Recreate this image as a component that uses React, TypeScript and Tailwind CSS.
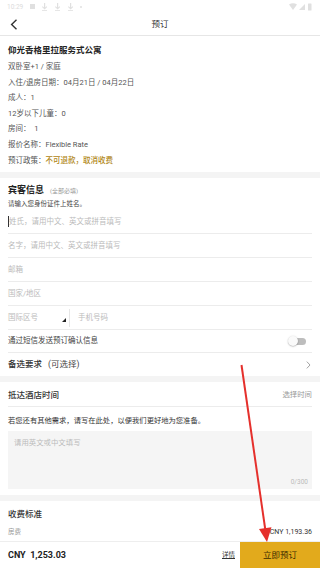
import React from "react";

const Row = ({ children, className = "" }: { children: React.ReactNode; className?: string }) => (
  <div className={`flex items-center ${className}`}>{children}</div>
);

export default function App() {
  return (
    <div className="relative w-[320px] h-[568px] overflow-hidden bg-white font-['Roboto','Noto_Sans_CJK_SC',sans-serif] flex flex-col leading-none">
      <div className="flex-1 overflow-hidden flex flex-col">
        {/* status bar */}
        <div className="h-[14px] shrink-0 flex items-center justify-between px-[7px] text-[#dcdcdc]">
          <div className="flex items-center gap-[6px]">
            <span className="text-[6.5px]">10:29</span>
            <svg width="56" height="8" viewBox="0 0 56 8" fill="#e0e0e0">
              <rect x="1" y="1" width="5" height="5" />
              <path d="M15 0h1.2v4.5l1.3-1.3.7.7-2.6 2.6-2.6-2.6.7-.7 1.3 1.3z" />
              <rect x="13" y="7" width="5" height="0.8" />
              <path d="M28 0h1.2v4.5l1.3-1.3.7.7-2.6 2.6-2.6-2.6.7-.7 1.3 1.3z" />
              <rect x="26" y="7" width="5" height="0.8" />
              <path d="M41 0h1.2v4.5l1.3-1.3.7.7-2.6 2.6-2.6-2.6.7-.7 1.3 1.3z" />
              <rect x="39" y="7" width="5" height="0.8" />
              <circle cx="52" cy="4" r="1" />
            </svg>
          </div>
          <svg width="24" height="8" viewBox="0 0 24 8" fill="#e0e0e0">
            <path d="M0 1.5 Q4 -1 8 1.5 L4 7 Z" />
            <path d="M10 7 L16 1 L16 7 Z" />
            <rect x="19" y="0.5" width="3.5" height="7" rx="0.5" />
          </svg>
        </div>
        {/* header */}
        <div className="h-[22px] shrink-0 relative flex items-center justify-center border-b border-[#e6e6e6]">
          <svg className="absolute left-[10px] top-[5px]" width="8" height="11" viewBox="0 0 8 11">
            <path d="M6.5 0.8 L1.6 5.5 L6.5 10.2" fill="none" stroke="#333" strokeWidth="1.4" />
          </svg>
          <span className="text-[8.5px] text-[#333]">预订</span>
        </div>

        {/* info */}
        <div className="px-[8px] pt-[6px] pb-[4px] shrink-0">
          <Row className="h-[17px]">
            <span className="text-[8.5px] font-bold text-[#222]">仰光香格里拉服务式公寓</span>
          </Row>
          {[
            "双卧室+1 / 家庭",
            "入住/退房日期：04月21日 / 04月22日",
            "成人：1",
            "12岁以下儿童：0",
            "房间：  1",
            "报价名称：Flexible Rate",
          ].map((t) => (
            <Row key={t} className="h-[15.6px]">
              <span className="text-[7.5px] text-[#555] whitespace-pre">{t}</span>
            </Row>
          ))}
          <Row className="h-[15.6px]">
            <span className="text-[7.5px] text-[#555]">预订政策：</span>
            <span className="text-[7.5px] text-[#b08614] font-medium">不可退款，取消收费</span>
          </Row>
        </div>
        <div className="h-[6px] shrink-0 bg-[#f4f4f4]" />

        {/* guest info */}
        <div className="px-[8px] pt-[4px] shrink-0">
          <Row className="h-[17px]">
            <span className="text-[9px] font-bold text-[#222]">宾客信息</span>
            <span className="text-[6px] text-[#999] ml-[6px]">(全部必填)</span>
          </Row>
          <Row className="h-[11px]">
            <span className="text-[6.5px] text-[#444]">请输入您身份证件上姓名。</span>
          </Row>
          <Row className="h-[24px] border-b border-[#ececec]">
            <span className="w-[1px] h-[11px] bg-[#333]" />
            <span className="text-[7.5px] text-[#bbb]">姓氏，请用中文、英文或拼音填写</span>
          </Row>
          <Row className="h-[24px] border-b border-[#ececec]">
            <span className="text-[7.5px] text-[#bbb]">名字，请用中文、英文或拼音填写</span>
          </Row>
          <Row className="h-[24px] border-b border-[#ececec]">
            <span className="text-[7.5px] text-[#bbb]">邮箱</span>
          </Row>
          <Row className="h-[24px] border-b border-[#ececec]">
            <span className="text-[7.5px] text-[#bbb]">国家/地区</span>
          </Row>
          <Row className="h-[24px] border-b border-[#ececec]">
            <div className="w-[56px] h-full relative flex items-center">
              <span className="text-[7.5px] text-[#bbb]">国际区号</span>
              <svg className="absolute right-[-2px] bottom-[7px]" width="4" height="4" viewBox="0 0 4 4">
                <path d="M4 0 L4 4 L0 4 Z" fill="#222" />
              </svg>
            </div>
            <div className="w-[1px] h-[18px] bg-[#e6e6e6] ml-[5px]" />
            <span className="text-[7.5px] text-[#bbb] ml-[8px]">手机号码</span>
          </Row>
          <Row className="h-[23px] border-b border-[#ececec] justify-between">
            <span className="text-[7.5px] text-[#444]">通过短信发送预订确认信息</span>
            <div className="relative w-[18px] h-[10px] mr-[6px] flex items-center">
              <div className="absolute left-[3px] right-0 h-[7px] rounded-full bg-[#bdbdbd]" />
              <div className="absolute left-0 w-[10px] h-[10px] rounded-full bg-[#fafafa] shadow-[0_0.5px_1.5px_rgba(0,0,0,0.35)]" />
            </div>
          </Row>
          <Row className="h-[23px] justify-between">
            <div className="flex items-center">
              <span className="text-[8.5px] font-medium text-[#333]">备选要求</span>
              <span className="text-[8.5px] text-[#444] ml-[6px]">(可选择)</span>
            </div>
            <svg width="5" height="8" viewBox="0 0 5 8" className="mr-[1px]">
              <path d="M0.8 0.6 L4 4 L0.8 7.4" fill="none" stroke="#999" strokeWidth="0.9" />
            </svg>
          </Row>
        </div>
        <div className="h-[6px] shrink-0 bg-[#f4f4f4]" />

        {/* arrival */}
        <div className="px-[8px] shrink-0">
          <Row className="h-[25px] pt-[2px] border-b border-[#ececec] justify-between">
            <span className="text-[8.5px] font-medium text-[#333]">抵达酒店时间</span>
            <span className="text-[7.4px] text-[#999]">选择时间</span>
          </Row>
          <Row className="h-[24px] pt-[2px]">
            <span className="text-[7.3px] text-[#333]">若您还有其他需求，请写在此处，以便我们更好地为您准备。</span>
          </Row>
          <div className="h-[58px] bg-[#f5f5f5] relative">
            <span className="absolute left-[6px] top-[8px] text-[7.4px] text-[#bbb]">请用英文或中文填写</span>
            <span className="absolute right-[4px] bottom-[4px] text-[6.5px] text-[#bbb]">0/300</span>
          </div>
          <div className="h-[6px]" />
        </div>
        <div className="h-[6px] shrink-0 bg-[#f4f4f4]" />

        {/* fees */}
        <div className="px-[8px] shrink-0">
          <Row className="h-[26px]">
            <span className="text-[8.5px] font-medium text-[#333]">收费标准</span>
          </Row>
          <Row className="h-[10px] justify-between">
            <span className="text-[6.5px] text-[#999]">房费</span>
            <span className="text-[7px] text-[#333]">≈ CNY 1,193.36</span>
          </Row>
        </div>
      </div>

      {/* bottom bar */}
      <div className="h-[27px] shrink-0 flex items-center border-t border-[#eeeeee] bg-white">
        <span className="pl-[8px] text-[9px] font-bold text-[#222] whitespace-pre">CNY  1,253.03</span>
        <span className="ml-auto mr-[5px] text-[6.5px] text-[#333] underline">详情</span>
        <div className="w-[80px] h-full bg-[#e2aa1c] flex items-center justify-center">
          <span className="text-[8.5px] text-[#3a2a00]">立即预订</span>
        </div>
      </div>

      {/* red annotation arrow */}
      <svg className="absolute left-0 top-0 pointer-events-none" width="320" height="568" viewBox="0 0 320 568">
        <line x1="241.5" y1="365" x2="265.2" y2="529" stroke="#e5302c" strokeWidth="2" />
        <path d="M267 542 L271.5 527.3 L259 529 Z" fill="#e5302c" />
      </svg>
    </div>
  );
}
